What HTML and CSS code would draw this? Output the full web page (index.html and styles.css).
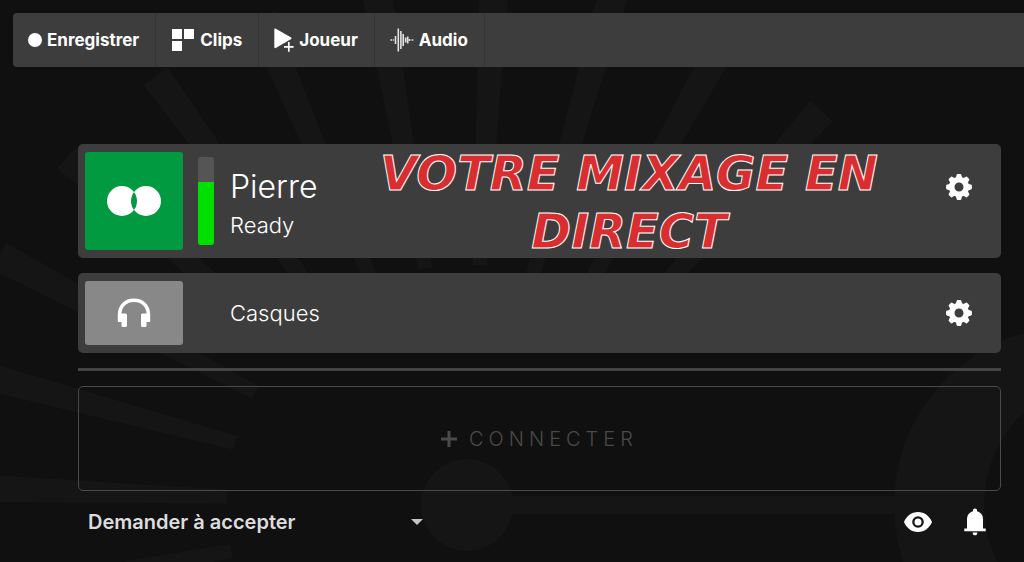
FILE: index.html
```html
<!DOCTYPE html>
<html lang="fr">
<head>
  <meta charset="UTF-8">
  <meta name="viewport" content="width=device-width, initial-scale=1.0">
  <title>Mixage en direct</title>
  <link rel="stylesheet" href="styles.css">
</head>
<body>
  <!-- Background artwork -->
  <svg class="backdrop" width="1024" height="562" viewBox="0 0 1024 562" aria-hidden="true">
    <defs>
      <path id="ray" d="M-7 -240 L-15 -530 L15 -530 L7 -240 Z"/>
    </defs>
    <g transform="translate(467 505)">
      <circle r="46"/>
      <use href="#ray" transform="rotate(-101)"/>
      <use href="#ray" transform="rotate(-88)"/>
      <use href="#ray" transform="rotate(-75)"/>
      <use href="#ray" transform="rotate(-62)"/>
      <use href="#ray" transform="rotate(-49)"/>
      <use href="#ray" transform="rotate(-36)"/>
      <use href="#ray" transform="rotate(-23)"/>
      <use href="#ray" transform="rotate(-10)"/>
      <use href="#ray" transform="rotate(3)"/>
      <use href="#ray" transform="rotate(16)"/>
      <use href="#ray" transform="rotate(29)"/>
      <use href="#ray" transform="rotate(42)"/>
    </g>
    <path d="M512 496H896V514H512Z"/>
    <path fill-rule="evenodd" d="M894 505a179 179 0 1 1 358 0a179 179 0 1 1 -358 0ZM984 505a128 128 0 1 1 256 0a128 128 0 1 1 -256 0Z"/>
  </svg>

  <!-- Shared icons -->
  <svg class="sprite" width="0" height="0" aria-hidden="true">
    <symbol id="gear" viewBox="-13 -13 26 26">
      <g fill="currentColor">
        <path fill-rule="evenodd" d="M0 -10a10 10 0 1 1 0 20a10 10 0 1 1 0 -20ZM0 -4.5a4.5 4.5 0 1 0 0 9a4.5 4.5 0 1 0 0 -9Z"/>
        <path id="tooth" d="M-3.7 -8.8C-2.8 -10 -2.6 -11 -2.4 -12Q-2.2 -12.9 -1.2 -12.9H1.2Q2.2 -12.9 2.4 -12C2.6 -11 2.8 -10 3.7 -8.8Z"/>
        <use href="#tooth" transform="rotate(45)"/>
        <use href="#tooth" transform="rotate(90)"/>
        <use href="#tooth" transform="rotate(135)"/>
        <use href="#tooth" transform="rotate(180)"/>
        <use href="#tooth" transform="rotate(225)"/>
        <use href="#tooth" transform="rotate(270)"/>
        <use href="#tooth" transform="rotate(315)"/>
      </g>
    </symbol>
  </svg>

  <nav class="toolbar">
    <button class="tool" type="button">
      <svg width="14" height="14" viewBox="0 0 14 14"><circle cx="7" cy="7" r="7" fill="currentColor"/></svg>
      Enregistrer
    </button>
    <button class="tool" type="button">
      <svg width="24" height="24" viewBox="0 0 24 24" fill="currentColor"><path d="M1 1h10v10H1zM13 1h10v10H13zM1 13h10v10H1z"/></svg>
      Clips
    </button>
    <button class="tool" type="button">
      <svg width="20" height="24" viewBox="0 0 20 24">
        <path d="M0.3 1.6Q0.3 0 1.8 0.7L17.2 9.6Q18 10.3 17.2 11L1.8 20Q0.3 20.6 0.3 19Z" fill="currentColor"/>
        <path d="M14.8 13.5v10M10 18.5h9.6" stroke="#3d3d3d" stroke-width="3.4"/>
        <path d="M14.8 14v9.8M10 18.8h9.6" stroke="currentColor" stroke-width="1.7"/>
      </svg>
      Joueur
    </button>
    <button class="tool" type="button">
      <svg width="24" height="24" viewBox="0 0 24 24" stroke="currentColor" stroke-width="1.6" fill="none">
        <path d="M0.4 12h1.8M3 12h1M5.5 8v8M8.3 0.4v23.2M10.9 3v18M13.2 6v12M15.6 9.5v5M17.7 8.5v7M19.6 11v2M21.6 12h1.8" opacity=".85"/>
      </svg>
      Audio
    </button>
  </nav>

  <main class="mixer">
    <section class="channel channel-main">
      <button class="tile tile-on" type="button" aria-label="Pierre">
        <svg width="54" height="32" viewBox="0 0 54 32">
          <path fill="#fff" fill-rule="evenodd" d="M15 1a15 15 0 1 0 0 30a15 15 0 1 0 0 -30ZM39 1a15 15 0 1 0 0 30a15 15 0 1 0 0 -30Z"/>
        </svg>
      </button>
      <div class="meter"><div class="meter-level" style="height: 72%"></div></div>
      <div class="info">
        <h2 class="name">Pierre</h2>
        <p class="status">Ready</p>
      </div>
      <p class="caption">VOTRE MIXAGE EN<br>DIRECT</p>
      <button class="icon-button settings" type="button" aria-label="Réglages de Pierre">
        <svg width="26" height="26"><use href="#gear"/></svg>
      </button>
    </section>

    <section class="channel">
      <button class="tile tile-off" type="button" aria-label="Casques">
        <svg width="34" height="30" viewBox="0 0 34 30" fill="none">
          <path d="M2.6 23V16.5C2.6 8 8.5 2.2 17 2.2S31.4 8 31.4 16.5V23" stroke="#fff" stroke-width="3.6"/>
          <path d="M1 15.5h7.5q1.5 0 1.5 1.5v10.5q0 1.5 -1.5 1.5h-2.5q-1.5 0 -1.5 -1.5v-3.5h-3.5zM33 15.5h-7.5q-1.5 0 -1.5 1.5v10.5q0 1.5 1.5 1.5h2.5q1.5 0 1.5 -1.5v-3.5h3.5z" fill="#fff"/>
        </svg>
      </button>
      <div class="info">
        <p class="status">Casques</p>
      </div>
      <button class="icon-button settings" type="button" aria-label="Réglages des casques">
        <svg width="26" height="26"><use href="#gear"/></svg>
      </button>
    </section>

    <hr class="divider">

    <button class="connect" type="button">
      <svg width="16" height="16" viewBox="0 0 16 16"><path d="M8 0v16M0 8h16" stroke="currentColor" stroke-width="3"/></svg>
      CONNECTER
    </button>

    <footer class="footer">
      <div class="answer">
        <select class="answer-select" aria-label="Mode de réponse">
          <option>Demander à accepter</option>
        </select>
        <svg class="answer-arrow" width="12" height="6" viewBox="0 0 12 6"><path d="M0 0h12L6 6z" fill="#c4c4c4"/></svg>
      </div>
      <button class="icon-button" type="button" aria-label="Afficher">
        <svg width="28" height="20" viewBox="0 0 28 20">
          <path fill="currentColor" fill-rule="evenodd" d="M14 0C20.5 0 25.5 4 28 10C25.5 16 20.5 20 14 20S2.5 16 0 10C2.5 4 7.5 0 14 0ZM14 4.2a5.8 5.8 0 1 0 0 11.6a5.8 5.8 0 1 0 0 -11.6ZM14 6.5a3.5 3.5 0 1 1 0 7a3.5 3.5 0 1 1 0 -7Z"/>
        </svg>
      </button>
      <button class="icon-button" type="button" aria-label="Notifications">
        <svg width="22" height="28" viewBox="0 0 22 28" fill="currentColor">
          <path d="M9 3.3V2Q9 0.5 11 0.5T13 2V3.3C17 4.3 19 7.5 19 11.5V20.5H21.7V23.3H0.3V20.5H3V11.5C3 7.5 5 4.3 9 3.3Z"/>
          <path d="M8.5 24.5h5Q13.3 27.2 11 27.2T8.5 24.5Z"/>
        </svg>
      </button>
    </footer>
  </main>
</body>
</html>
```

FILE: styles.css
```css
* {
  box-sizing: border-box;
}
body {
  margin: 0;
  background: #101010;
  color: #fff;
  font-family: Inter, "Liberation Sans", sans-serif;
}
button,
select {
  margin: 0;
  padding: 0;
  border: 0;
  background: none;
  color: inherit;
  font: inherit;
}
svg {
  display: block;
  flex: none;
}
h2,
p {
  margin: 0;
  font-weight: 400;
}
.backdrop {
  position: absolute;
  top: 0;
  left: 0;
  z-index: -1;
  fill: #151515;
}
.sprite {
  position: absolute;
}

/* Toolbar */
.toolbar {
  display: flex;
  height: 54px;
  margin: 13px 0 0 13px;
  background: #3d3d3d;
  border-radius: 4px 0 0 4px;
}
.tool {
  display: flex;
  align-items: center;
  gap: 5px;
  padding: 0 16px 0 15px;
  border-right: 1px solid #343434;
  font-size: 17px;
  font-weight: 700;
}

/* Mixer */
.mixer {
  display: flex;
  flex-direction: column;
  margin: 77px 23px 0 78px;
}
.channel {
  position: relative;
  display: flex;
  align-items: center;
  min-height: 80px;
  margin-bottom: 15px;
  padding: 8px 29px 8px 7px;
  background: #3d3d3d;
  border-radius: 5px;
}
.tile {
  display: flex;
  align-items: center;
  justify-content: center;
  width: 98px;
  height: 64px;
  border-radius: 3px;
}
.tile-on {
  height: 98px;
  background: #029a40;
}
.tile-off {
  background: #888;
}
.meter {
  display: flex;
  align-items: flex-end;
  width: 16px;
  height: 88px;
  margin-left: 15px;
  background: #555;
  border-radius: 3px;
  overflow: hidden;
}
.meter-level {
  width: 100%;
  background: #00e000;
}
.info {
  flex: 1;
  margin-left: 47px;
}
.meter + .info {
  margin-left: 16px;
  padding-top: 4px;
}
.name {
  font-size: 32px;
  line-height: 44px;
  font-weight: 300;
}
.status {
  font-size: 22px;
  line-height: 32px;
  font-weight: 300;
}
.caption {
  position: absolute;
  top: 0;
  left: 290px;
  right: 111px;
  color: #d92d30;
  font: italic bold 48px/58px Verdana, "DejaVu Sans", sans-serif;
  text-align: center;
  white-space: nowrap;
  -webkit-text-stroke: 1px #fff;
}
.icon-button {
  display: flex;
}
.channel-main .settings {
  margin-bottom: 28px;
}
.divider {
  width: 100%;
  height: 3px;
  margin: 0 0 15px;
  border: 0;
  background: #444;
}
.connect {
  display: flex;
  align-items: center;
  justify-content: center;
  gap: 12px;
  height: 105px;
  border: 1px solid #4a4a4a;
  border-radius: 5px;
  color: #4a4a4a;
  font-size: 20px;
  font-weight: 300;
  letter-spacing: 5px;
}

/* Footer */
.footer {
  display: flex;
  align-items: center;
  gap: 32px;
  height: 62px;
  padding: 0 15px 0 10px;
}
.answer {
  position: relative;
  width: 335px;
  margin-right: auto;
}
.answer-select {
  width: 100%;
  appearance: none;
  color: #ddd;
  font-size: 20px;
  line-height: 28px;
  font-weight: 600;
}
.answer-arrow {
  position: absolute;
  top: 11px;
  right: 0;
  pointer-events: none;
}
```
